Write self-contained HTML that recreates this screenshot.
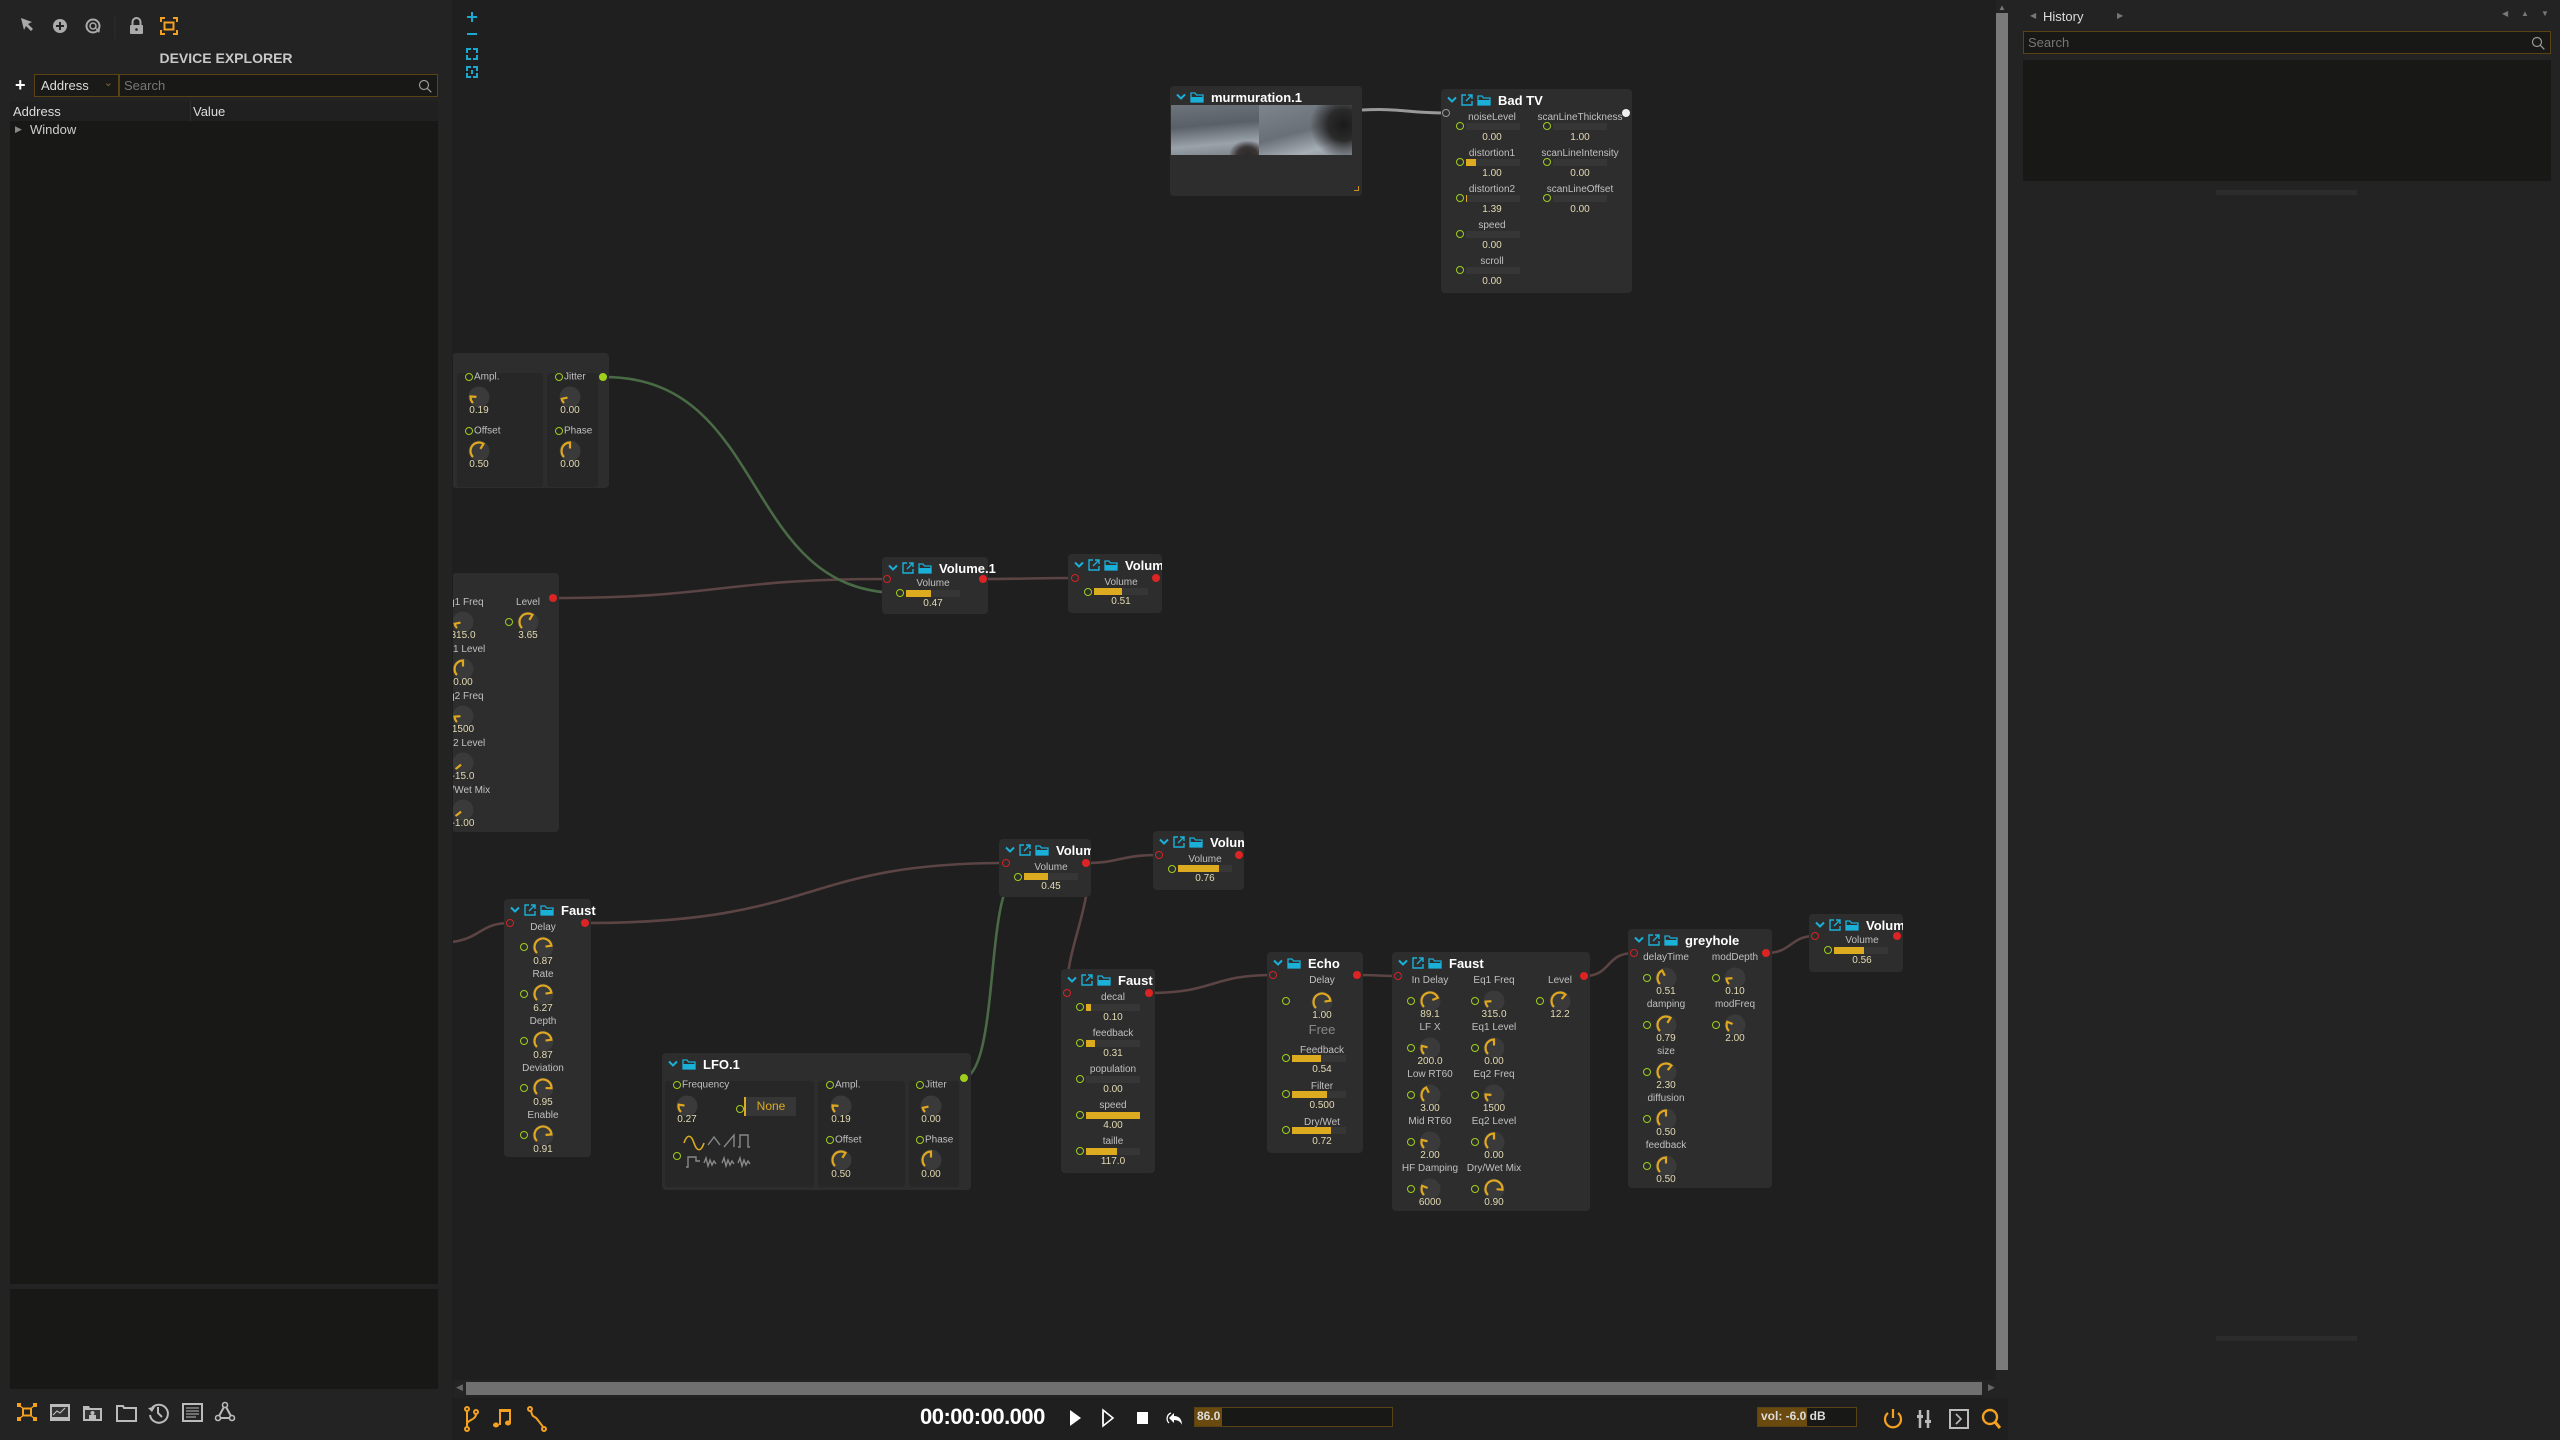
<!DOCTYPE html>
<html><head><meta charset="utf-8">
<style>
*{box-sizing:border-box;margin:0;padding:0}
body{width:2560px;height:1440px;background:#1f1f1f;font-family:"Liberation Sans",sans-serif;overflow:hidden;position:relative;color:#c4c4c4}
.a{position:absolute}
#left{left:0;top:0;width:452px;height:1440px;background:#232323}
#right{left:2008px;top:0;width:552px;height:1440px;background:#232323}
#canvas{left:453px;top:0;width:1543px;height:1380px;overflow:hidden;background:#1f1f1f}
#inner{position:absolute;left:-453px;top:0;width:2560px;height:1440px}
.n{position:absolute;background:#2d2d2d;border-radius:4px}
.n>*{position:absolute}
.hd{left:6px;top:3px;height:16px;display:flex;align-items:center;gap:4px;white-space:nowrap}
.hd b{color:#fff;font-size:13px;margin-left:3px}
.c,.v{transform:translate(-50%,-50%);white-space:nowrap;font-size:10px;line-height:12px}
.c{color:#c0c0c0}
.v{color:#e4dab2}
.lf{transform:translateY(-50%);white-space:nowrap;font-size:10px;color:#c0c0c0}
.pg,.pri,.pro,.pw{width:8px;height:8px;border-radius:50%;transform:translate(-50%,-50%)}
.pg{border:1.8px solid #9fcf1c}
.pri{border:1.8px solid #d42424}
.pro{background:#dc2424}
.pw{background:#eee}
.bar{height:7px;background:#363636;width:54px}
.bar i{display:block;height:7px;background:#dcab1f}
.sub{background:#272727;border-radius:3px}
.k{width:0;height:0}
</style></head><body>

<!-- LEFT PANEL -->
<div id="left" class="a">
 <svg class="a" style="left:0;top:0" width="452" height="40">
  <path d="M21 18l11 4-4 2 5 5-2 2-5-5-2 4z" fill="#aaa"/>
  <circle cx="60" cy="26" r="7" fill="#aaa"/><path d="M60 22v8M56 26h8" stroke="#232323" stroke-width="2"/>
  <circle cx="93" cy="26" r="6.5" fill="none" stroke="#aaa" stroke-width="2"/><circle cx="93" cy="26" r="3" fill="none" stroke="#aaa" stroke-width="1.5"/><path d="M94 27l5 6 1-3z" fill="#aaa"/>
  <path d="M115 15v24" stroke="#2c2c2c" stroke-width="1"/>
  <rect x="130" y="25" width="13" height="9" rx="1" fill="#aaa"/><path d="M132.5 25v-3a4 4 0 0 1 8 0v3" fill="none" stroke="#aaa" stroke-width="2"/><circle cx="136.5" cy="29.5" r="1.3" fill="#232323"/>
  <path d="M161 22v-4h4M173 18h4v4M177 30v4h-4M165 34h-4v-4" fill="none" stroke="#f4a020" stroke-width="2"/><rect x="164.5" y="22.5" width="9" height="7" fill="none" stroke="#f4a020" stroke-width="2"/>
 </svg>
 <div class="a" style="left:0;width:452px;top:50px;text-align:center;font-weight:bold;font-size:14px;color:#c8c8c8">DEVICE EXPLORER</div>
 <div class="a" style="left:15px;top:76px;color:#fff;font-size:18px;font-weight:bold;line-height:18px">+</div>
 <div class="a" style="left:34px;top:74px;width:85px;height:23px;border:1px solid #5a4214;background:#1a1a19;font-size:13px;color:#ddd;padding:3px 6px">Address<span style="position:absolute;right:5px;top:1px;color:#8a6a2a;font-size:11px">&#8964;</span></div>
 <div class="a" style="left:119px;top:74px;width:319px;height:23px;border:1px solid #5a4214;background:#181817;font-size:13px;color:#777;padding:3px 4px">Search
  <svg class="a" style="right:5px;top:4px" width="14" height="14"><circle cx="6" cy="6" r="4.5" fill="none" stroke="#999" stroke-width="1.2"/><path d="M9.3 9.3l4 4" stroke="#999" stroke-width="1.3"/></svg></div>
 <div class="a" style="left:10px;top:101px;width:428px;height:1183px;background:#181817"></div>
 <div class="a" style="left:10px;top:101px;width:428px;height:20px;background:#202020"></div>
 <div class="a" style="left:190px;top:101px;width:1px;height:20px;background:#2e2e2e"></div>
 <div class="a" style="left:13px;top:104px;font-size:13px;color:#ddd">Address</div>
 <div class="a" style="left:193px;top:104px;font-size:13px;color:#ddd">Value</div>
 <div class="a" style="left:15px;top:124px;font-size:9px;color:#888">&#9654;</div>
 <div class="a" style="left:30px;top:122px;font-size:13px;color:#ccc">Window</div>
 <div class="a" style="left:10px;top:1289px;width:428px;height:100px;background:#181817"></div>
 <svg class="a" style="left:0;top:1398px" width="452" height="32">
  <g fill="#f4a020"><rect x="17" y="5" width="4" height="4"/><rect x="33" y="5" width="4" height="4"/><rect x="17" y="19" width="4" height="4"/><rect x="33" y="19" width="4" height="4"/></g>
  <rect x="23" y="10.5" width="8" height="7" fill="none" stroke="#f4a020" stroke-width="2"/><path d="M20 8l4 3M34 8l-4 3M20 20l4-3M34 20l-4-3" stroke="#f4a020" stroke-width="1.3"/>
  <rect x="50" y="6" width="20" height="17" fill="#bbb"/><rect x="52" y="9" width="16" height="10" fill="#333"/><path d="M53 17l4-4 3 2 5-5" stroke="#bbb" fill="none" stroke-width="1.2"/>
  <path d="M83 8h6l1 2h12v13H83z" fill="#bbb"/><rect x="85" y="12" width="15" height="9" fill="#333"/><circle cx="92.5" cy="15" r="2" fill="#bbb"/><rect x="89" y="17" width="7" height="4" fill="#bbb"/>
  <path d="M117 8h6l1 2h12v13h-19z" fill="none" stroke="#bbb" stroke-width="2"/>
  <path d="M152 10a9 9 0 1 1-2 7" fill="none" stroke="#bbb" stroke-width="2"/><path d="M148 10l4 4 3-5z" fill="#bbb"/><path d="M158 9v6l4 4" stroke="#bbb" stroke-width="2" fill="none"/>
  <rect x="183" y="6" width="19" height="17" fill="none" stroke="#bbb" stroke-width="2"/><path d="M186 10h13M186 13h13M186 16h13M186 19h10" stroke="#bbb" stroke-width="1"/>
  <path d="M225 7l-7 13h14z" fill="none" stroke="#bbb" stroke-width="2"/><circle cx="225" cy="7" r="2.5" fill="#232323" stroke="#bbb" stroke-width="1.6"/><circle cx="218" cy="20" r="2.5" fill="#232323" stroke="#bbb" stroke-width="1.6"/><circle cx="232" cy="20" r="2.5" fill="#232323" stroke="#bbb" stroke-width="1.6"/>
 </svg>
</div>

<!-- CANVAS -->
<div id="canvas" class="a"><div id="inner">
<svg class="a" style="left:0;top:0" width="2560" height="1440">
 <g fill="none" stroke-width="2.6" stroke="#5c4444">
  <path d="M553 598 C720 598,720 579,887 579"/>
  <path d="M983 579 C1030 579,1030 578,1075 578"/>
  <path d="M452 942 C482 938,480 923,510 923"/>
  <path d="M585 923 C820 923,800 863,1005 863"/>
  <path d="M1086 863 C1120 863,1120 855,1158 855"/>
  <path d="M1086 863 C1095 900,1065 950,1067 993"/>
  <path d="M1149 993 C1215 993,1210 975,1273 975"/>
  <path d="M1357 975 C1378 975,1378 976,1398 976"/>
  <path d="M1584 976 C1612 976,1605 953,1634 953"/>
  <path d="M1766 953 C1792 953,1790 936,1815 936"/>
 </g>
 <g fill="none" stroke-width="2.6" stroke="#4a6a46">
  <path d="M604 377 C770 377,740 593,900 593"/>
  <path d="M964 1078 C1000 1070,985 877,1018 877"/>
 </g>
 <path d="M1362 110 C1400 108,1408 113,1446 113" stroke="#999" stroke-width="3" fill="none"/>
</svg>

<svg class="a" style="left:463px;top:8px" width="18" height="72">
 <path d="M9 4v10M4 9h10" stroke="#19a9d3" stroke-width="2"/>
 <path d="M4 26h10" stroke="#19a9d3" stroke-width="2"/>
 <path d="M4 45v-4h4M10 41h4v4M14 47v4h-4M8 51H4v-4" stroke="#19a9d3" stroke-width="2" fill="none"/>
 <path d="M4 63v-4h4M10 59h4v4M14 65v4h-4M8 69H4v-4" stroke="#19a9d3" stroke-width="2" fill="none"/><path d="M9 62v4" stroke="#19a9d3" stroke-width="2"/>
</svg>

<!-- murmuration -->
<div class="n" style="left:1170px;top:86px;width:192px;height:110px">
 <div class="hd"><svg width="10" height="8"><path d="M1 1.5l4 4 4-4" stroke="#1ab0d8" stroke-width="2" fill="none"/></svg><svg width="14" height="11"><path d="M1 1h4l1.5 2H13v7H1z" fill="none" stroke="#1ab0d8" stroke-width="1.3"/><path d="M1 5h12v5H1z" fill="#1ab0d8"/></svg><b>murmuration.1</b></div>
 <div style="left:1px;top:19px;width:88px;height:50px;background:linear-gradient(175deg,#6e747c,#5a6068 40%,#9aa2aa 75%,#7a8088)"></div>
 <div style="left:89px;top:19px;width:93px;height:50px;background:linear-gradient(165deg,#7c848c,#6a7078 50%,#a6aeb6 80%,#8a9098)"></div>
 <div style="left:60px;top:55px;width:29px;height:14px;background:radial-gradient(ellipse at 60% 100%,#2a2a2a 0,#3a3434 40%,transparent 75%)"></div>
 <div style="left:140px;top:19px;width:42px;height:50px;background:radial-gradient(circle at 80% 40%,#1a1a1a 0,#2a2a2a 35%,transparent 75%)"></div>
 <div style="left:184px;top:100px;width:5px;height:5px;border-right:1px solid #c89020;border-bottom:1px solid #c89020"></div>
</div>

<!-- Bad TV -->
<div class="n" style="left:1441px;top:89px;width:191px;height:204px">
 <div class="hd"><svg width="10" height="8"><path d="M1 1.5l4 4 4-4" stroke="#1ab0d8" stroke-width="2" fill="none"/></svg><svg width="12" height="12"><path d="M5 1H1v10h10V7M7 1h4v4M11 1L5 7" stroke="#1ab0d8" stroke-width="1.4" fill="none"/></svg><svg width="14" height="11"><path d="M1 1h4l1.5 2H13v7H1z" fill="none" stroke="#1ab0d8" stroke-width="1.3"/><path d="M1 5h12v5H1z" fill="#1ab0d8"/></svg><b>Bad TV</b></div>
 <div class="pri" style="left:5px;top:24px;border-color:#999"></div><div class="pw" style="left:185px;top:24px"></div>
 <div class="c" style="left:51px;top:29px">noiseLevel</div><div class="pg" style="left:19px;top:37px"></div><div class="bar" style="left:25px;top:34px"><i style="width:0"></i></div><div class="v" style="left:51px;top:49px">0.00</div>
 <div class="c" style="left:51px;top:65px">distortion1</div><div class="pg" style="left:19px;top:73px"></div><div class="bar" style="left:25px;top:70px"><i style="width:10px"></i></div><div class="v" style="left:51px;top:85px">1.00</div>
 <div class="c" style="left:51px;top:101px">distortion2</div><div class="pg" style="left:19px;top:109px"></div><div class="bar" style="left:25px;top:106px"><i style="width:1px"></i></div><div class="v" style="left:51px;top:121px">1.39</div>
 <div class="c" style="left:51px;top:137px">speed</div><div class="pg" style="left:19px;top:145px"></div><div class="bar" style="left:25px;top:142px"></div><div class="v" style="left:51px;top:157px">0.00</div>
 <div class="c" style="left:51px;top:173px">scroll</div><div class="pg" style="left:19px;top:181px"></div><div class="bar" style="left:25px;top:178px"></div><div class="v" style="left:51px;top:193px">0.00</div>
 <div class="c" style="left:139px;top:29px">scanLineThickness</div><div class="pg" style="left:106px;top:37px"></div><div class="bar" style="left:112px;top:34px"></div><div class="v" style="left:139px;top:49px">1.00</div>
 <div class="c" style="left:139px;top:65px">scanLineIntensity</div><div class="pg" style="left:106px;top:73px"></div><div class="bar" style="left:112px;top:70px"></div><div class="v" style="left:139px;top:85px">0.00</div>
 <div class="c" style="left:139px;top:101px">scanLineOffset</div><div class="pg" style="left:106px;top:109px"></div><div class="bar" style="left:112px;top:106px"></div><div class="v" style="left:139px;top:121px">0.00</div>
</div>

<!-- A -->
<div class="n" style="left:452px;top:353px;width:157px;height:135px">
 <div class="sub" style="left:5px;top:20px;width:86px;height:114px"></div>
 <div class="sub" style="left:95px;top:20px;width:51px;height:114px"></div>
 <div class="pg" style="left:17px;top:24px"></div><div class="lf" style="left:22px;top:24px">Ampl.</div>
 <div class="k" style="left:27px;top:44px" v="0.18"></div><div class="v" style="left:27px;top:58px">0.19</div>
 <div class="pg" style="left:17px;top:78px"></div><div class="lf" style="left:22px;top:78px">Offset</div>
 <div class="k" style="left:27px;top:98px" v="0.62"></div><div class="v" style="left:27px;top:112px">0.50</div>
 <div class="pg" style="left:107px;top:24px"></div><div class="lf" style="left:112px;top:24px">Jitter</div>
 <div class="k" style="left:118px;top:44px" v="0.12"></div><div class="v" style="left:118px;top:58px">0.00</div>
 <div class="pg" style="left:107px;top:78px"></div><div class="lf" style="left:112px;top:78px">Phase</div>
 <div class="k" style="left:118px;top:98px" v="0.5"></div><div class="v" style="left:118px;top:112px">0.00</div>
 <div class="pg" style="left:151px;top:24px;background:#9fcf1c"></div>
</div>

<!-- B -->
<div class="n" style="left:452px;top:573px;width:107px;height:259px">
 <div class="c" style="left:11px;top:30px">Eq1 Freq</div><div class="k" style="left:11px;top:49px" v="0.12"></div><div class="v" style="left:11px;top:63px">315.0</div>
 <div class="c" style="left:11px;top:77px">Eq1 Level</div><div class="k" style="left:11px;top:96px" v="0.5"></div><div class="v" style="left:11px;top:110px">0.00</div>
 <div class="c" style="left:11px;top:124px">Eq2 Freq</div><div class="k" style="left:11px;top:143px" v="0.15"></div><div class="v" style="left:11px;top:157px">1500</div>
 <div class="c" style="left:11px;top:171px">Eq2 Level</div><div class="k" style="left:11px;top:190px" v="0.02"></div><div class="v" style="left:11px;top:204px">-15.0</div>
 <div class="c" style="left:11px;top:218px">Dry/Wet Mix</div><div class="k" style="left:11px;top:237px" v="0.02"></div><div class="v" style="left:11px;top:251px">-1.00</div>
 <div class="c" style="left:76px;top:30px">Level</div><div class="pg" style="left:57px;top:49px"></div><div class="k" style="left:76px;top:49px" v="0.62"></div><div class="v" style="left:76px;top:63px">3.65</div>
 <div class="pro" style="left:101px;top:25px"></div>
</div>

<!-- Volume.1 -->
<div class="n" style="left:882px;top:557px;width:106px;height:57px">
 <div class="hd"><svg width="10" height="8"><path d="M1 1.5l4 4 4-4" stroke="#1ab0d8" stroke-width="2" fill="none"/></svg><svg width="12" height="12"><path d="M5 1H1v10h10V7M7 1h4v4M11 1L5 7" stroke="#1ab0d8" stroke-width="1.4" fill="none"/></svg><svg width="14" height="11"><path d="M1 1h4l1.5 2H13v7H1z" fill="none" stroke="#1ab0d8" stroke-width="1.3"/><path d="M1 5h12v5H1z" fill="#1ab0d8"/></svg><b>Volume.1</b></div>
 <div class="pri" style="left:5px;top:22px"></div><div class="pro" style="left:101px;top:22px"></div>
 <div class="c" style="left:51px;top:27px">Volume</div><div class="pg" style="left:18px;top:36px"></div><div class="bar" style="left:24px;top:33px"><i style="width:25px"></i></div><div class="v" style="left:51px;top:47px">0.47</div>
</div>
<div class="n" style="left:1068px;top:554px;width:94px;height:59px;overflow:hidden">
 <div class="hd"><svg width="10" height="8"><path d="M1 1.5l4 4 4-4" stroke="#1ab0d8" stroke-width="2" fill="none"/></svg><svg width="12" height="12"><path d="M5 1H1v10h10V7M7 1h4v4M11 1L5 7" stroke="#1ab0d8" stroke-width="1.4" fill="none"/></svg><svg width="14" height="11"><path d="M1 1h4l1.5 2H13v7H1z" fill="none" stroke="#1ab0d8" stroke-width="1.3"/><path d="M1 5h12v5H1z" fill="#1ab0d8"/></svg><b>Volume</b></div>
 <div class="pri" style="left:7px;top:24px"></div><div class="pro" style="left:88px;top:24px"></div>
 <div class="c" style="left:53px;top:29px">Volume</div><div class="pg" style="left:20px;top:38px"></div><div class="bar" style="left:26px;top:34px"><i style="width:28px"></i></div><div class="v" style="left:53px;top:48px">0.51</div>
</div>
<div class="n" style="left:999px;top:839px;width:92px;height:58px;overflow:hidden">
 <div class="hd"><svg width="10" height="8"><path d="M1 1.5l4 4 4-4" stroke="#1ab0d8" stroke-width="2" fill="none"/></svg><svg width="12" height="12"><path d="M5 1H1v10h10V7M7 1h4v4M11 1L5 7" stroke="#1ab0d8" stroke-width="1.4" fill="none"/></svg><svg width="14" height="11"><path d="M1 1h4l1.5 2H13v7H1z" fill="none" stroke="#1ab0d8" stroke-width="1.3"/><path d="M1 5h12v5H1z" fill="#1ab0d8"/></svg><b>Volume</b></div>
 <div class="pri" style="left:7px;top:24px"></div><div class="pro" style="left:87px;top:24px"></div>
 <div class="c" style="left:52px;top:29px">Volume</div><div class="pg" style="left:19px;top:38px"></div><div class="bar" style="left:25px;top:34px"><i style="width:24px"></i></div><div class="v" style="left:52px;top:48px">0.45</div>
</div>
<div class="n" style="left:1153px;top:831px;width:91px;height:59px;overflow:hidden">
 <div class="hd"><svg width="10" height="8"><path d="M1 1.5l4 4 4-4" stroke="#1ab0d8" stroke-width="2" fill="none"/></svg><svg width="12" height="12"><path d="M5 1H1v10h10V7M7 1h4v4M11 1L5 7" stroke="#1ab0d8" stroke-width="1.4" fill="none"/></svg><svg width="14" height="11"><path d="M1 1h4l1.5 2H13v7H1z" fill="none" stroke="#1ab0d8" stroke-width="1.3"/><path d="M1 5h12v5H1z" fill="#1ab0d8"/></svg><b>Volume</b></div>
 <div class="pri" style="left:6px;top:24px"></div><div class="pro" style="left:86px;top:24px"></div>
 <div class="c" style="left:52px;top:29px">Volume</div><div class="pg" style="left:19px;top:38px"></div><div class="bar" style="left:25px;top:34px"><i style="width:41px"></i></div><div class="v" style="left:52px;top:48px">0.76</div>
</div>
<div class="n" style="left:1809px;top:914px;width:94px;height:58px;overflow:hidden">
 <div class="hd"><svg width="10" height="8"><path d="M1 1.5l4 4 4-4" stroke="#1ab0d8" stroke-width="2" fill="none"/></svg><svg width="12" height="12"><path d="M5 1H1v10h10V7M7 1h4v4M11 1L5 7" stroke="#1ab0d8" stroke-width="1.4" fill="none"/></svg><svg width="14" height="11"><path d="M1 1h4l1.5 2H13v7H1z" fill="none" stroke="#1ab0d8" stroke-width="1.3"/><path d="M1 5h12v5H1z" fill="#1ab0d8"/></svg><b>Volume</b></div>
 <div class="pri" style="left:6px;top:22px"></div><div class="pro" style="left:88px;top:22px"></div>
 <div class="c" style="left:53px;top:27px">Volume</div><div class="pg" style="left:19px;top:36px"></div><div class="bar" style="left:25px;top:33px"><i style="width:30px"></i></div><div class="v" style="left:53px;top:47px">0.56</div>
</div>

<!-- G -->
<div class="n" style="left:504px;top:899px;width:87px;height:258px">
 <div class="hd"><svg width="10" height="8"><path d="M1 1.5l4 4 4-4" stroke="#1ab0d8" stroke-width="2" fill="none"/></svg><svg width="12" height="12"><path d="M5 1H1v10h10V7M7 1h4v4M11 1L5 7" stroke="#1ab0d8" stroke-width="1.4" fill="none"/></svg><svg width="14" height="11"><path d="M1 1h4l1.5 2H13v7H1z" fill="none" stroke="#1ab0d8" stroke-width="1.3"/><path d="M1 5h12v5H1z" fill="#1ab0d8"/></svg><b>Faust</b></div>
 <div class="pri" style="left:6px;top:24px"></div><div class="pro" style="left:81px;top:24px"></div>
 <div class="c" style="left:39px;top:29px">Delay</div><div class="pg" style="left:20px;top:48px"></div><div class="k" style="left:39px;top:48px" v="0.8"></div><div class="v" style="left:39px;top:63px">0.87</div>
 <div class="c" style="left:39px;top:76px">Rate</div><div class="pg" style="left:20px;top:95px"></div><div class="k" style="left:39px;top:95px" v="0.8"></div><div class="v" style="left:39px;top:110px">6.27</div>
 <div class="c" style="left:39px;top:123px">Depth</div><div class="pg" style="left:20px;top:142px"></div><div class="k" style="left:39px;top:142px" v="0.8"></div><div class="v" style="left:39px;top:157px">0.87</div>
 <div class="c" style="left:39px;top:170px">Deviation</div><div class="pg" style="left:20px;top:189px"></div><div class="k" style="left:39px;top:189px" v="0.84"></div><div class="v" style="left:39px;top:204px">0.95</div>
 <div class="c" style="left:39px;top:217px">Enable</div><div class="pg" style="left:20px;top:236px"></div><div class="k" style="left:39px;top:236px" v="0.82"></div><div class="v" style="left:39px;top:251px">0.91</div>
</div>

<!-- H LFO.1 -->
<div class="n" style="left:662px;top:1053px;width:309px;height:137px">
 <div class="hd"><svg width="10" height="8"><path d="M1 1.5l4 4 4-4" stroke="#1ab0d8" stroke-width="2" fill="none"/></svg><svg width="14" height="11"><path d="M1 1h4l1.5 2H13v7H1z" fill="none" stroke="#1ab0d8" stroke-width="1.3"/><path d="M1 5h12v5H1z" fill="#1ab0d8"/></svg><b>LFO.1</b></div>
 <div class="sub" style="left:3px;top:28px;width:149px;height:106px"></div>
 <div class="sub" style="left:156px;top:28px;width:87px;height:106px"></div>
 <div class="sub" style="left:247px;top:28px;width:50px;height:106px"></div>
 <div class="pg" style="left:15px;top:32px"></div><div class="lf" style="left:20px;top:32px">Frequency</div>
 <div class="k" style="left:25px;top:53px" v="0.2"></div><div class="v" style="left:25px;top:67px">0.27</div>
 <div class="pg" style="left:78px;top:56px"></div>
 <div style="left:82px;top:44px;width:52px;height:19px;background:#363636;border-left:2px solid #dcab1f;color:#dcab1f;font-size:12px;text-align:center;line-height:19px">None</div>
 <div class="pg" style="left:15px;top:103px"></div>
 <svg style="left:20px;top:80px" width="72" height="40">
  <path d="M2 10c3-9 7-9 10 0s7 9 10 0" stroke="#dcab1f" stroke-width="1.6" fill="none"/>
  <g stroke="#888" stroke-width="1.4" fill="none">
   <path d="M26 12l6-8 6 8"/><path d="M42 14l10-12v12"/><path d="M56 14h2V2h8v12h2"/>
   <path d="M4 34h2V24h8v4h4"/><path d="M22 30l2-5 2 8 2-6 2 5 2-4 2 3"/><path d="M40 30l2-5 2 8 2-6 2 5 2-4 2 3"/><path d="M56 30l2-5 2 8 2-6 2 5 2-4 2 3"/>
  </g>
 </svg>
 <div class="pg" style="left:168px;top:32px"></div><div class="lf" style="left:173px;top:32px">Ampl.</div>
 <div class="k" style="left:179px;top:53px" v="0.18"></div><div class="v" style="left:179px;top:67px">0.19</div>
 <div class="pg" style="left:168px;top:87px"></div><div class="lf" style="left:173px;top:87px">Offset</div>
 <div class="k" style="left:179px;top:107px" v="0.62"></div><div class="v" style="left:179px;top:122px">0.50</div>
 <div class="pg" style="left:258px;top:32px"></div><div class="lf" style="left:263px;top:32px">Jitter</div>
 <div class="k" style="left:269px;top:53px" v="0.12"></div><div class="v" style="left:269px;top:67px">0.00</div>
 <div class="pg" style="left:258px;top:87px"></div><div class="lf" style="left:263px;top:87px">Phase</div>
 <div class="k" style="left:269px;top:107px" v="0.5"></div><div class="v" style="left:269px;top:122px">0.00</div>
 <div class="pg" style="left:302px;top:25px;background:#9fcf1c"></div>
</div>

<!-- I -->
<div class="n" style="left:1061px;top:969px;width:94px;height:204px">
 <div class="hd"><svg width="10" height="8"><path d="M1 1.5l4 4 4-4" stroke="#1ab0d8" stroke-width="2" fill="none"/></svg><svg width="12" height="12"><path d="M5 1H1v10h10V7M7 1h4v4M11 1L5 7" stroke="#1ab0d8" stroke-width="1.4" fill="none"/></svg><svg width="14" height="11"><path d="M1 1h4l1.5 2H13v7H1z" fill="none" stroke="#1ab0d8" stroke-width="1.3"/><path d="M1 5h12v5H1z" fill="#1ab0d8"/></svg><b>Faust</b></div>
 <div class="pri" style="left:6px;top:24px"></div><div class="pro" style="left:88px;top:24px"></div>
 <div class="c" style="left:52px;top:29px">decal</div><div class="pg" style="left:19px;top:38px"></div><div class="bar" style="left:25px;top:35px"><i style="width:5px"></i></div><div class="v" style="left:52px;top:49px">0.10</div>
 <div class="c" style="left:52px;top:65px">feedback</div><div class="pg" style="left:19px;top:74px"></div><div class="bar" style="left:25px;top:71px"><i style="width:9px"></i></div><div class="v" style="left:52px;top:85px">0.31</div>
 <div class="c" style="left:52px;top:101px">population</div><div class="pg" style="left:19px;top:110px"></div><div class="bar" style="left:25px;top:107px"></div><div class="v" style="left:52px;top:121px">0.00</div>
 <div class="c" style="left:52px;top:137px">speed</div><div class="pg" style="left:19px;top:146px"></div><div class="bar" style="left:25px;top:143px"><i style="width:54px"></i></div><div class="v" style="left:52px;top:157px">4.00</div>
 <div class="c" style="left:52px;top:173px">taille</div><div class="pg" style="left:19px;top:182px"></div><div class="bar" style="left:25px;top:179px"><i style="width:31px"></i></div><div class="v" style="left:52px;top:193px">117.0</div>
</div>

<!-- J Echo -->
<div class="n" style="left:1267px;top:952px;width:96px;height:201px">
 <div class="hd"><svg width="10" height="8"><path d="M1 1.5l4 4 4-4" stroke="#1ab0d8" stroke-width="2" fill="none"/></svg><svg width="14" height="11"><path d="M1 1h4l1.5 2H13v7H1z" fill="none" stroke="#1ab0d8" stroke-width="1.3"/><path d="M1 5h12v5H1z" fill="#1ab0d8"/></svg><b>Echo</b></div>
 <div class="pri" style="left:6px;top:23px"></div><div class="pro" style="left:90px;top:23px"></div>
 <div class="c" style="left:55px;top:29px">Delay</div><div class="pg" style="left:19px;top:49px"></div><div class="k" style="left:55px;top:50px" v="0.8"></div><div class="v" style="left:55px;top:64px">1.00</div>
 <div class="c" style="left:55px;top:78px;font-size:13px;color:#888">Free</div>
 <div class="c" style="left:55px;top:99px">Feedback</div><div class="pg" style="left:19px;top:106px"></div><div class="bar" style="left:25px;top:103px"><i style="width:29px"></i></div><div class="v" style="left:55px;top:118px">0.54</div>
 <div class="c" style="left:55px;top:135px">Filter</div><div class="pg" style="left:19px;top:142px"></div><div class="bar" style="left:25px;top:139px"><i style="width:35px"></i></div><div class="v" style="left:55px;top:154px">0.500</div>
 <div class="c" style="left:55px;top:171px">Dry/Wet</div><div class="pg" style="left:19px;top:178px"></div><div class="bar" style="left:25px;top:175px"><i style="width:39px"></i></div><div class="v" style="left:55px;top:190px">0.72</div>
</div>

<!-- K -->
<div class="n" style="left:1392px;top:952px;width:198px;height:259px">
 <div class="hd"><svg width="10" height="8"><path d="M1 1.5l4 4 4-4" stroke="#1ab0d8" stroke-width="2" fill="none"/></svg><svg width="12" height="12"><path d="M5 1H1v10h10V7M7 1h4v4M11 1L5 7" stroke="#1ab0d8" stroke-width="1.4" fill="none"/></svg><svg width="14" height="11"><path d="M1 1h4l1.5 2H13v7H1z" fill="none" stroke="#1ab0d8" stroke-width="1.3"/><path d="M1 5h12v5H1z" fill="#1ab0d8"/></svg><b>Faust</b></div>
 <div class="pri" style="left:6px;top:24px"></div><div class="pro" style="left:192px;top:24px"></div>
 <div class="c" style="left:38px;top:29px">In Delay</div><div class="pg" style="left:19px;top:49px"></div><div class="k" style="left:38px;top:49px" v="0.75"></div><div class="v" style="left:38px;top:63px">89.1</div>
 <div class="c" style="left:38px;top:76px">LF X</div><div class="pg" style="left:19px;top:96px"></div><div class="k" style="left:38px;top:96px" v="0.22"></div><div class="v" style="left:38px;top:110px">200.0</div>
 <div class="c" style="left:38px;top:123px">Low RT60</div><div class="pg" style="left:19px;top:143px"></div><div class="k" style="left:38px;top:143px" v="0.4"></div><div class="v" style="left:38px;top:157px">3.00</div>
 <div class="c" style="left:38px;top:170px">Mid RT60</div><div class="pg" style="left:19px;top:190px"></div><div class="k" style="left:38px;top:190px" v="0.22"></div><div class="v" style="left:38px;top:204px">2.00</div>
 <div class="c" style="left:38px;top:217px">HF Damping</div><div class="pg" style="left:19px;top:237px"></div><div class="k" style="left:38px;top:237px" v="0.25"></div><div class="v" style="left:38px;top:251px">6000</div>
 <div class="c" style="left:102px;top:29px">Eq1 Freq</div><div class="pg" style="left:83px;top:49px"></div><div class="k" style="left:102px;top:49px" v="0.15"></div><div class="v" style="left:102px;top:63px">315.0</div>
 <div class="c" style="left:102px;top:76px">Eq1 Level</div><div class="pg" style="left:83px;top:96px"></div><div class="k" style="left:102px;top:96px" v="0.5"></div><div class="v" style="left:102px;top:110px">0.00</div>
 <div class="c" style="left:102px;top:123px">Eq2 Freq</div><div class="pg" style="left:83px;top:143px"></div><div class="k" style="left:102px;top:143px" v="0.18"></div><div class="v" style="left:102px;top:157px">1500</div>
 <div class="c" style="left:102px;top:170px">Eq2 Level</div><div class="pg" style="left:83px;top:190px"></div><div class="k" style="left:102px;top:190px" v="0.5"></div><div class="v" style="left:102px;top:204px">0.00</div>
 <div class="c" style="left:102px;top:217px">Dry/Wet Mix</div><div class="pg" style="left:83px;top:237px"></div><div class="k" style="left:102px;top:237px" v="0.85"></div><div class="v" style="left:102px;top:251px">0.90</div>
 <div class="c" style="left:168px;top:29px">Level</div><div class="pg" style="left:148px;top:49px"></div><div class="k" style="left:168px;top:49px" v="0.65"></div><div class="v" style="left:168px;top:63px">12.2</div>
</div>

<!-- L -->
<div class="n" style="left:1628px;top:929px;width:144px;height:259px">
 <div class="hd"><svg width="10" height="8"><path d="M1 1.5l4 4 4-4" stroke="#1ab0d8" stroke-width="2" fill="none"/></svg><svg width="12" height="12"><path d="M5 1H1v10h10V7M7 1h4v4M11 1L5 7" stroke="#1ab0d8" stroke-width="1.4" fill="none"/></svg><svg width="14" height="11"><path d="M1 1h4l1.5 2H13v7H1z" fill="none" stroke="#1ab0d8" stroke-width="1.3"/><path d="M1 5h12v5H1z" fill="#1ab0d8"/></svg><b>greyhole</b></div>
 <div class="pri" style="left:6px;top:24px"></div><div class="pro" style="left:138px;top:24px"></div>
 <div class="c" style="left:38px;top:29px">delayTime</div><div class="pg" style="left:19px;top:49px"></div><div class="k" style="left:38px;top:49px" v="0.4"></div><div class="v" style="left:38px;top:63px">0.51</div>
 <div class="c" style="left:38px;top:76px">damping</div><div class="pg" style="left:19px;top:96px"></div><div class="k" style="left:38px;top:96px" v="0.62"></div><div class="v" style="left:38px;top:110px">0.79</div>
 <div class="c" style="left:38px;top:123px">size</div><div class="pg" style="left:19px;top:143px"></div><div class="k" style="left:38px;top:143px" v="0.65"></div><div class="v" style="left:38px;top:157px">2.30</div>
 <div class="c" style="left:38px;top:170px">diffusion</div><div class="pg" style="left:19px;top:190px"></div><div class="k" style="left:38px;top:190px" v="0.5"></div><div class="v" style="left:38px;top:204px">0.50</div>
 <div class="c" style="left:38px;top:217px">feedback</div><div class="pg" style="left:19px;top:237px"></div><div class="k" style="left:38px;top:237px" v="0.5"></div><div class="v" style="left:38px;top:251px">0.50</div>
 <div class="c" style="left:107px;top:29px">modDepth</div><div class="pg" style="left:88px;top:49px"></div><div class="k" style="left:107px;top:49px" v="0.15"></div><div class="v" style="left:107px;top:63px">0.10</div>
 <div class="c" style="left:107px;top:76px">modFreq</div><div class="pg" style="left:88px;top:96px"></div><div class="k" style="left:107px;top:96px" v="0.25"></div><div class="v" style="left:107px;top:110px">2.00</div>
</div>
</div></div>

<!-- scrollbars -->
<div class="a" style="left:1996px;top:0;width:13px;height:1380px;background:#232323"></div>
<div class="a" style="left:1996px;top:13px;width:13px;height:1357px;background:#7a7a7a"></div>
<div class="a" style="left:1998px;top:3px;font-size:8px;color:#777">&#9650;</div>
<div class="a" style="left:453px;top:1380px;width:1556px;height:18px;background:#232323"></div>
<div class="a" style="left:466px;top:1382px;width:1516px;height:13px;background:#707070"></div>
<div class="a" style="left:456px;top:1382px;font-size:9px;color:#666">&#9664;</div>
<div class="a" style="left:1988px;top:1382px;font-size:9px;color:#666">&#9654;</div>

<!-- bottom toolbar -->
<div class="a" style="left:453px;top:1398px;width:1555px;height:42px;background:#1f1f1f"></div>
<svg class="a" style="left:460px;top:1405px" width="100" height="30">
 <g stroke="#f4a020" stroke-width="2" fill="none"><circle cx="7" cy="4" r="2"/><circle cx="7" cy="24" r="2"/><circle cx="16" cy="7" r="2"/><path d="M7 6v16M16 9c0 6-9 6-9 10"/></g>
 <g fill="#f4a020"><path d="M39 4h12v14h-2V7h-8v13h-2z"/><ellipse cx="36" cy="20" rx="3" ry="2.5"/><ellipse cx="48" cy="18" rx="3" ry="2.5"/></g>
 <g stroke="#f4a020" stroke-width="2" fill="none"><circle cx="70" cy="4" r="2"/><circle cx="84" cy="24" r="2"/><path d="M71 6c2 8 3 4 6 8s5 6 6 8"/></g>
</svg>
<div class="a" style="left:920px;top:1404px;font-size:22px;font-weight:bold;color:#fff;letter-spacing:-0.5px">00:00:00.000</div>
<svg class="a" style="left:1068px;top:1407px" width="130" height="24">
 <path d="M2 3l11 8-11 8z" fill="#fff"/>
 <path d="M35 3l10 8-10 8z" fill="none" stroke="#fff" stroke-width="1.6"/><path d="M35 5v12" stroke="#fff" stroke-width="1.5"/>
 <rect x="69" y="5" width="11" height="12" fill="#fff"/>
 <path d="M106 6l-5 5 5 5v-3c4 0 7 2 8 5 0-6-3-9-8-9z" fill="#fff"/><path d="M103 6a6 6 0 0 0-2 10" stroke="#fff" fill="none" stroke-width="1.3"/>
</svg>
<div class="a" style="left:1194px;top:1407px;width:199px;height:20px;background:#181817;border:1px solid #5a4214"></div>
<div class="a" style="left:1195px;top:1408px;width:27px;height:18px;background:#6a4a0e"></div>
<div class="a" style="left:1197px;top:1409px;font-size:12px;color:#ddd;font-weight:bold">86.0</div>
<div class="a" style="left:1757px;top:1407px;width:100px;height:20px;background:#181817;border:1px solid #5a4214"></div>
<div class="a" style="left:1758px;top:1408px;width:49px;height:18px;background:#6a4a0e"></div>
<div class="a" style="left:1761px;top:1409px;font-size:12px;color:#ddd;font-weight:bold">vol: -6.0 dB</div>
<svg class="a" style="left:1882px;top:1405px" width="125" height="28">
 <path d="M6 8a8 8 0 1 0 10 0" stroke="#f4a020" stroke-width="2.2" fill="none"/><path d="M11 4v9" stroke="#f4a020" stroke-width="2.2"/>
 <path d="M38 5v18M46 5v18" stroke="#bbb" stroke-width="2.5"/><rect x="35" y="10" width="6" height="3" fill="#bbb"/><rect x="43" y="15" width="6" height="3" fill="#bbb"/>
 <rect x="68" y="5" width="18" height="18" fill="none" stroke="#bbb" stroke-width="2"/><path d="M74 9l5 5-5 5" stroke="#bbb" stroke-width="1.6" fill="none"/>
 <circle cx="108" cy="12" r="7" stroke="#f4a020" stroke-width="2.4" fill="none"/><path d="M113 17l5 6" stroke="#f4a020" stroke-width="3"/>
</svg>

<!-- RIGHT PANEL -->
<div id="right" class="a">
 <div class="a" style="left:22px;top:11px;font-size:8px;color:#777">&#9664;</div>
 <div class="a" style="left:35px;top:9px;font-size:13px;color:#ddd">History</div>
 <div class="a" style="left:109px;top:11px;font-size:8px;color:#777">&#9654;</div>
 <div class="a" style="left:494px;top:9px;font-size:8px;color:#777">&#9664;</div>
 <div class="a" style="left:513px;top:9px;font-size:8px;color:#777">&#9650;</div>
 <div class="a" style="left:533px;top:9px;font-size:8px;color:#777">&#9660;</div>
 <div class="a" style="left:552px;top:9px;font-size:8px;color:#777">&#9654;</div>
 <div class="a" style="left:15px;top:31px;width:528px;height:23px;border:1px solid #5a4214;background:#181817;font-size:13px;color:#777;padding:3px 4px">Search
  <svg class="a" style="right:5px;top:4px" width="14" height="14"><circle cx="6" cy="6" r="4.5" fill="none" stroke="#999" stroke-width="1.2"/><path d="M9.3 9.3l4 4" stroke="#999" stroke-width="1.3"/></svg></div>
 <div class="a" style="left:15px;top:60px;width:528px;height:121px;background:#181817"></div>
 <div class="a" style="left:208px;top:190px;width:141px;height:5px;background:#2c2c2c"></div>
 <div class="a" style="left:208px;top:1336px;width:141px;height:5px;background:#2c2c2c"></div>
</div>

<script>
document.querySelectorAll('.k').forEach(function(e){
 var v=parseFloat(e.getAttribute('v')),r=8.5,c=11;
 var a0=135*Math.PI/180,a1=(135+270*v)*Math.PI/180;
 var x0=c+r*Math.cos(a0),y0=c+r*Math.sin(a0),x1=c+r*Math.cos(a1),y1=c+r*Math.sin(a1);
 var lg=(270*v>180)?1:0;
 var xi=c+r*0.3*Math.cos(a1),yi=c+r*0.3*Math.sin(a1);
 e.innerHTML='<svg width="22" height="22" style="position:absolute;left:-11px;top:-11px"><circle cx="11" cy="11" r="10.5" fill="#3a3a3a"/><path d="M'+x0.toFixed(2)+' '+y0.toFixed(2)+' A'+r+' '+r+' 0 '+lg+' 1 '+x1.toFixed(2)+' '+y1.toFixed(2)+' L'+xi.toFixed(2)+' '+yi.toFixed(2)+'" fill="none" stroke="#e0a820" stroke-width="2.2"/></svg>';
});
</script>
</body></html>
